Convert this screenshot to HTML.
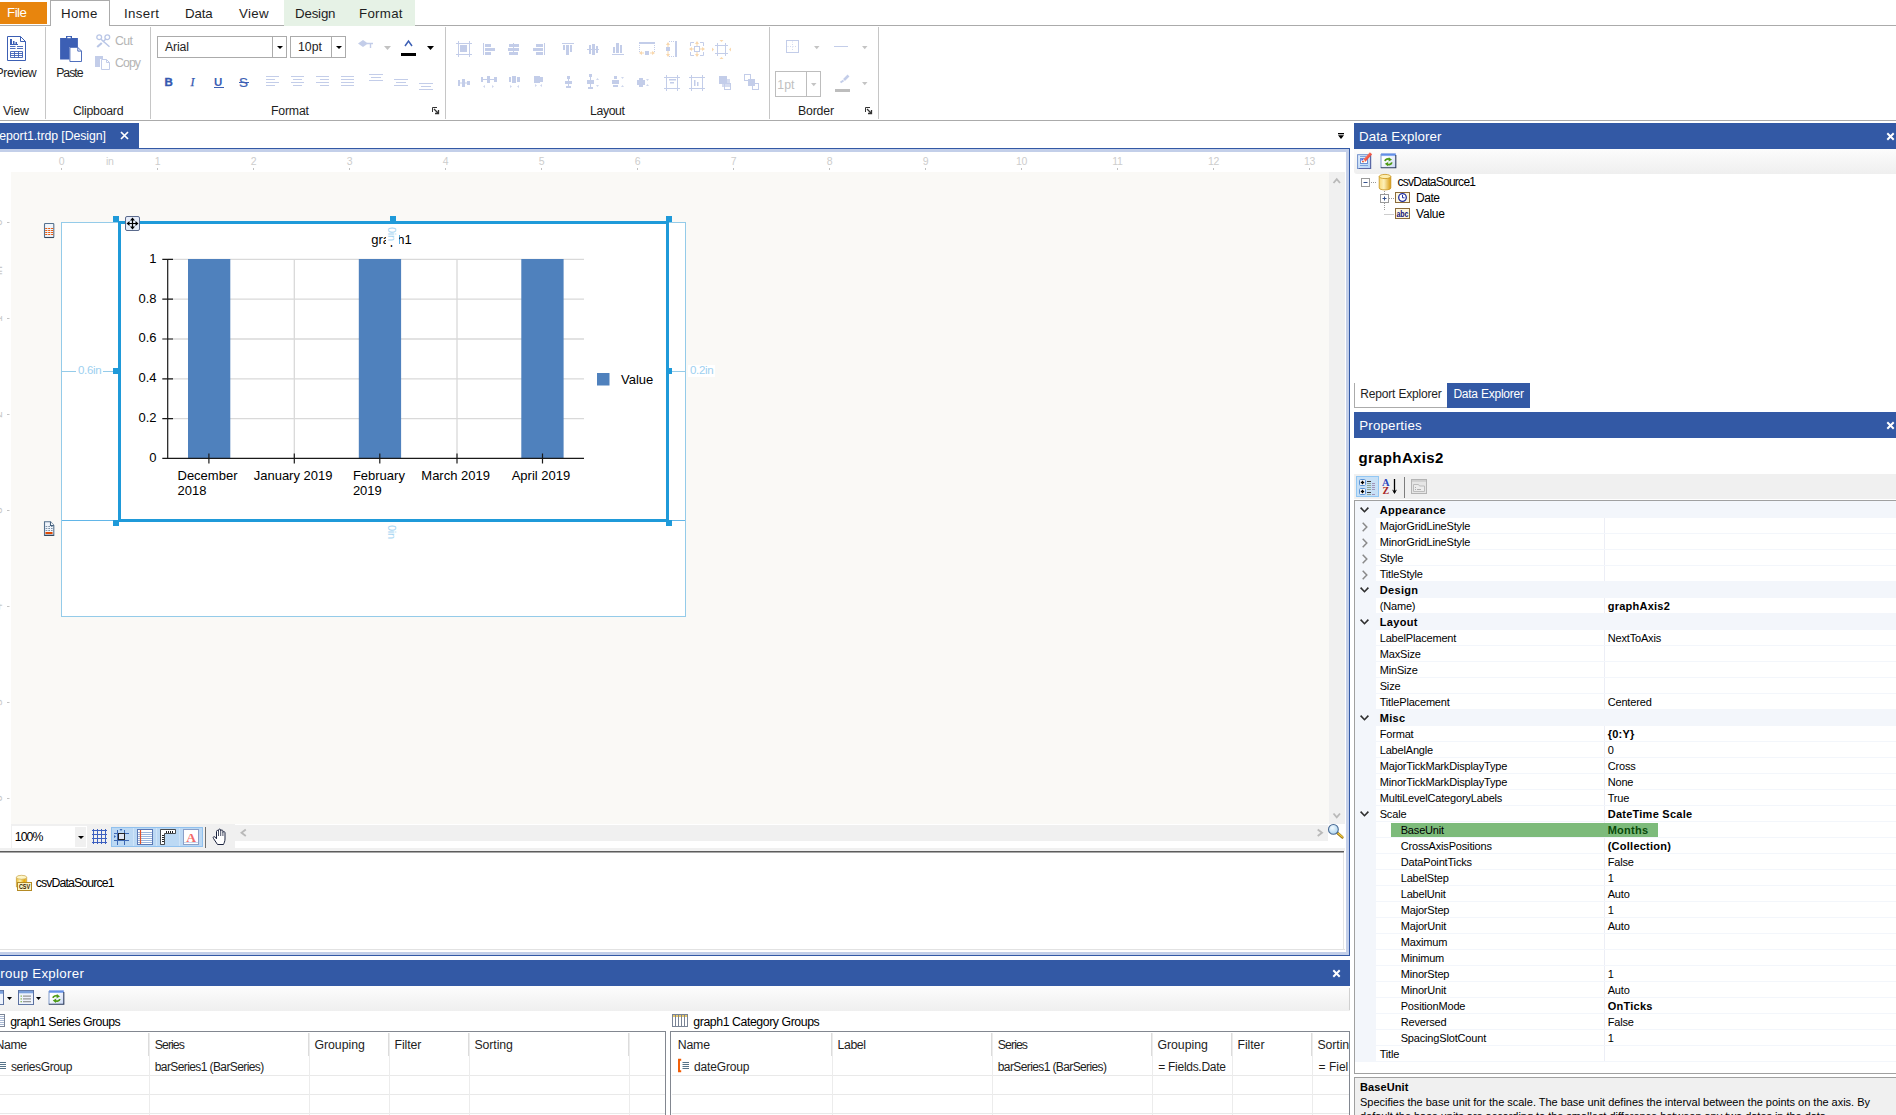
<!DOCTYPE html>
<html><head><meta charset="utf-8"><title>Report Designer</title>
<style>
*{box-sizing:border-box;margin:0;padding:0}
html,body{width:1896px;height:1115px;overflow:hidden;background:#fff}
body{position:relative;font-family:"Liberation Sans",sans-serif;font-size:12px;color:#1e1e1e}
.a{position:absolute}
.t{position:absolute;white-space:nowrap;line-height:1}
svg{position:absolute;overflow:visible}
.hdr{position:absolute;background:#3359a5;color:#fff;font-size:14px}
.hdr .t{top:5px}
.sep{position:absolute;width:1px;background:#c6c6c6;top:27px;height:92px}
.gl{position:absolute;top:105px;font-size:12.5px;white-space:nowrap;line-height:1;color:#1e1e1e}
.dis{color:#b4b4b4}
.pg{position:absolute;left:1357px;width:539px;height:16px;font-size:11px;line-height:16px;white-space:nowrap}
.pg .n{position:absolute;left:23px;top:0}
.pg .n2{position:absolute;left:44px;top:0}
.pg .v{position:absolute;left:251px;top:0}
.pg.cat{background:#f2f3f8;font-weight:bold;font-size:11.5px}
.b{font-weight:bold}
.th{position:absolute;top:1038px;font-size:12.5px;white-space:nowrap;line-height:1}
.td{position:absolute;top:1061px;font-size:11.5px;white-space:nowrap;line-height:1}
</style></head><body>
<!-- ===== Ribbon tab strip ===== -->
<div class="a" style="left:0;top:25px;width:1896px;height:1px;background:#ababab"></div>
<div class="a" style="left:284px;top:0;width:131px;height:26px;background:#e6f2e6"></div>
<div class="a" style="left:0;top:2px;width:47px;height:22px;background:#e8850d"></div>
<div class="t" style="left:7.0px;top:6px;font-size:13.3px;letter-spacing:-0.477px;color:#fff;">File</div>
<div class="a" style="left:50px;top:0;width:60px;height:26px;background:#fff;border:1px solid #ababab;border-bottom:none"></div>
<div class="t" style="left:61.0px;top:7px;font-size:13.3px;letter-spacing:0.274px;">Home</div>
<div class="t" style="left:124.0px;top:7px;font-size:13.3px;letter-spacing:0.347px;">Insert</div>
<div class="t" style="left:185.0px;top:7px;font-size:13.3px;letter-spacing:-0.131px;">Data</div>
<div class="t" style="left:239.0px;top:7px;font-size:13.3px;letter-spacing:0.305px;">View</div>
<div class="t" style="left:295.0px;top:7px;font-size:13.3px;letter-spacing:-0.180px;">Design</div>
<div class="t" style="left:359.0px;top:7px;font-size:13.3px;letter-spacing:0.276px;">Format</div>

<!-- ===== Ribbon body ===== -->
<div class="a" style="left:0;top:120px;width:1896px;height:1px;background:#ababab"></div>
<div class="sep" style="left:45px"></div>
<div class="sep" style="left:150px"></div>
<div class="sep" style="left:445px"></div>
<div class="sep" style="left:769px"></div>
<div class="sep" style="left:878px"></div>
<div class="t" style="left:3.0px;top:105px;font-size:12.3px;letter-spacing:-0.146px;">View</div>
<div class="t" style="left:73.0px;top:105px;font-size:12.3px;letter-spacing:-0.268px;">Clipboard</div>
<div class="t" style="left:271.0px;top:105px;font-size:12.3px;letter-spacing:-0.191px;">Format</div>
<div class="t" style="left:590.0px;top:105px;font-size:12.3px;letter-spacing:-0.386px;">Layout</div>
<div class="t" style="left:798.0px;top:105px;font-size:12.3px;letter-spacing:-0.183px;">Border</div>

<!-- Preview -->
<svg style="left:6px;top:35px" width="22" height="27" viewBox="6 35 22 27" fill="none" stroke="#3c5fb4">
<path d="M7.500 36.500H20.500L25.500 41.500V60.500H7.500Z" fill="#fff"/>
<path d="M20.500 36.500V41.500H25.500"/>
<path d="M10 44.500H18" />
<rect x="10" y="39" width="2" height="5" fill="#3c5fb4" stroke="none"/><rect x="13" y="41" width="1.500" height="3" fill="#3c5fb4" stroke="none"/><rect x="15.500" y="42" width="1.500" height="2" fill="#3c5fb4" stroke="none"/>
<path d="M10 46.500H15.500M17 46.500H23M10 48.500H15.500M17 48.500H23" stroke-width="0.900"/>
<path d="M10.500 51.500H22.500V57.500H10.500ZM10.500 53.500H22.500M10.500 55.500H22.500M14.500 51.500V57.500M18.500 51.500V57.500" stroke-width="0.900"/>
</svg>
<div class="t" style="left:-4.5px;top:67px;font-size:12.3px;letter-spacing:-0.424px;">Preview</div>
<!-- Paste -->
<svg style="left:59px;top:35px" width="24" height="28" viewBox="59 35 24 28">
<path d="M60.100 37.900H66V36H72V37.900H77.900V47H69.500V59.600H60.100Z" fill="#3c5fb4"/>
<rect x="67.300" y="36.900" width="3.400" height="1.300" fill="#fff"/>
<path d="M69.900 47.400H77.800L81.500 51.100V61.500H69.900Z" fill="#fff" stroke="#3c5fb4" stroke-width="0.900"/>
<path d="M77.800 47.400V51.100H81.500" fill="none" stroke="#3c5fb4" stroke-width="0.900"/>
</svg>
<div class="t" style="left:56.2px;top:67px;font-size:12.3px;letter-spacing:-1.038px;">Paste</div>
<!-- Cut / Copy -->
<svg style="left:96px;top:34px" width="15" height="15" viewBox="0 0 15 15">
<circle cx="3.200" cy="3.200" r="2.400" fill="none" stroke="#b9c6e6" stroke-width="1.300"/>
<circle cx="11.300" cy="3.200" r="2.400" fill="none" stroke="#b9c6e6" stroke-width="1.300"/>
<path d="M5 5.200L13.500 12.800M9.600 5.200L6.800 8" stroke="#b9c6e6" stroke-width="1.500" fill="none"/><path d="M5.800 9L1.200 13" stroke="#b9c6e6" stroke-width="2.200" fill="none"/>
</svg>
<div class="t" style="left:115.0px;top:35px;font-size:12.3px;letter-spacing:-0.570px;color:#b4b4b4;">Cut</div>
<svg style="left:95px;top:56px" width="16" height="15" viewBox="0 0 16 15">
<path d="M0 0H8V3H5V11H0Z" fill="#c3cde9"/>
<path d="M6.5 3.5H11.5L14.5 6.5V13.5H6.5Z" fill="#fff" stroke="#c3cde9"/>
<path d="M11.5 3.5V6.5H14.5" fill="none" stroke="#c3cde9"/>
</svg>
<div class="t" style="left:115.0px;top:57px;font-size:12.3px;letter-spacing:-0.905px;color:#b4b4b4;">Copy</div>

<!-- Font combos -->
<div class="a" style="left:157px;top:36px;width:130px;height:22px;border:1px solid #ababab;background:#fff"></div>
<div class="a" style="left:272px;top:37px;width:1px;height:20px;background:#ababab"></div>
<div class="t" style="left:165.0px;top:41px;font-size:12.3px;letter-spacing:-0.152px;">Arial</div>
<svg style="left:277px;top:46px" width="6" height="3.500"><path d="M0 0H6L3 3Z" fill="#000"/></svg>
<div class="a" style="left:290px;top:36px;width:56px;height:22px;border:1px solid #ababab;background:#fff"></div>
<div class="a" style="left:331px;top:37px;width:1px;height:20px;background:#ababab"></div>
<div class="t" style="left:298.0px;top:41px;font-size:12.3px;letter-spacing:0.020px;">10pt</div>
<svg style="left:336px;top:46px" width="6" height="3"><path d="M0 0H6L3 3Z" fill="#000"/></svg>
<!-- fill / font colour -->
<svg style="left:358px;top:40px" width="16" height="12" viewBox="0 0 16 12"><path d="M5 0L10 3.5L5 7L0 3.5Z" fill="#c3cde9"/><path d="M9 3.5H15M12.5 3.5V8" stroke="#c3cde9" stroke-width="1.4" fill="none"/></svg>
<svg style="left:384px;top:46px" width="7" height="4"><path d="M0 0H7L3.5 4Z" fill="#c2c2c2"/></svg>
<svg style="left:404px;top:40px" width="9" height="7" viewBox="0 0 9 7"><path d="M1 6L4.5 1L8 6" stroke="#3c5fb4" stroke-width="1.5" fill="none"/></svg>
<div class="a" style="left:401px;top:53px;width:15px;height:3px;background:#000"></div>
<svg style="left:427px;top:46px" width="7" height="4"><path d="M0 0H7L3.5 4Z" fill="#000"/></svg>

<!-- B I U S -->
<div class="t" style="left:164.500px;top:77px;font-size:11.500px;font-weight:bold;color:#3458b0;-webkit-text-stroke:0.350px #3458b0">B</div>
<div class="t" style="left:190.500px;top:76px;font-size:12px;font-style:italic;font-family:'Liberation Serif',serif;color:#3458b0;-webkit-text-stroke:0.250px #3458b0">I</div>
<div class="t" style="left:214px;top:77px;font-size:11.500px;font-weight:bold;color:#3c5fb4">U</div>
<div class="a" style="left:214px;top:87px;width:10px;height:1.200px;background:#3c5fb4"></div>
<div class="t" style="left:239px;top:75.500px;font-size:13.500px;color:#3c5fb4;-webkit-text-stroke:0.200px #3c5fb4">S</div>
<div class="a" style="left:239px;top:81.800px;width:9.500px;height:1.300px;background:#3c5fb4"></div>
<!-- align icons -->
<svg style="left:266px;top:75px" width="170" height="20" viewBox="0 0 170 20" stroke="#c3cde9" stroke-width="1" fill="none">
<path d="M0 1.5h13M0 4.5h9M0 7.5h13M0 10.5h9"/>
<path d="M25 1.5h13M27 4.5h9M25 7.5h13M27 10.5h9"/>
<path d="M50 1.5h13M54 4.5h9M50 7.5h13M54 10.5h9"/>
<path d="M75 1.5h13M75 4.5h13M75 7.5h13M75 10.5h13"/>
<path d="M103 -0.5h14M105 2.5h10M103 5.5h14"/>
<path d="M128 4.5h14M130 7.5h10M128 10.5h14"/>
<path d="M153 8.5h14M155 11.5h10M153 14.5h14"/>
</svg>
<!-- dialog launchers -->
<svg style="left:432px;top:107px" width="7" height="7" viewBox="0 0 7 7"><path d="M0.5 5V0.5H5" fill="none" stroke="#333"/><path d="M2 2L6.5 6.5M6.5 3v3.5H3" stroke="#333" fill="none" stroke-width="1.3"/></svg>
<svg style="left:865px;top:107px" width="7" height="7" viewBox="0 0 7 7"><path d="M0.5 5V0.5H5" fill="none" stroke="#333"/><path d="M2 2L6.5 6.5M6.5 3v3.5H3" stroke="#333" fill="none" stroke-width="1.3"/></svg>
<!-- ===== Layout group icons ===== -->
<svg style="left:448px;top:30px" width="320" height="70" viewBox="448 30 320 70" fill="#c3cde9" stroke="none">
<g stroke="#c3cde9" stroke-width="1" fill="none">
<!-- r1 i1 frame -->
<path d="M456 43.5h16M456 54.5h16M458.5 41v16M469.5 41v16"/>
<!-- align left -->
<path d="M483.5 43v12"/>
<!-- align center -->
<path d="M513.5 43v12"/>
<!-- align right -->
<path d="M544.5 43v12"/>
<!-- top -->
<path d="M562 43.5h12"/>
<!-- middle -->
<path d="M587 49.5h12"/>
<!-- bottom -->
<path d="M612 54.5h12"/>
<!-- same width -->
<path d="M639 43h16" stroke-width="2"/>
<path d="M639.5 45v7M654.5 45v7" stroke-dasharray="1 1"/>
<!-- same height -->
<path d="M676 41v16" stroke-width="2"/>
<path d="M669 41.5h6M669 56.5h6" stroke-dasharray="1 1"/>
<!-- same size -->
<path d="M690.5 46v-3.500h3.500M700 42.500h3.500v3.500M703.500 52v3.500h-3.500M694 55.500h-3.500v-3.500"/>
<rect x="694.5" y="46.500" width="5" height="5"/>
<!-- size to grid -->
<rect x="717.5" y="45.500" width="8" height="8"/>
<path d="M715 45.500h13M715 53.500h13M717.500 43v13M725.500 43v13" />
<!-- r2: frames -->
<path d="M664 77.500h16M664 88.500h16M666.500 75v16M677.500 75v16"/>
<path d="M689 77.500h16M689 88.500h16M691.500 75v16M702.500 75v16"/>
<!-- bring/send -->
<rect x="724.5" y="83.500" width="6" height="6" fill="#fff"/>
<rect x="744.500" y="74.500" width="6" height="6" fill="#fff"/>
<rect x="752.500" y="83.500" width="6" height="6" fill="#fff"/>
</g>
<!-- filled parts -->
<rect x="460" y="45" width="7" height="7"/>
<rect x="485" y="44" width="6" height="3"/><rect x="485" y="48" width="10" height="3"/><rect x="485" y="52" width="6" height="3"/>
<rect x="509" y="44" width="10" height="3"/><rect x="508" y="48" width="11" height="3"/><rect x="509" y="52" width="9" height="3"/>
<rect x="536" y="44" width="7" height="3"/><rect x="533" y="48" width="10" height="3"/><rect x="536" y="52" width="7" height="3"/>
<rect x="563" y="45" width="2" height="5"/><rect x="566" y="45" width="3" height="10"/><rect x="570" y="45" width="2" height="7"/>
<rect x="589" y="45" width="2" height="9"/><rect x="592" y="44" width="3" height="11"/><rect x="596" y="46" width="2" height="7"/>
<rect x="613" y="47" width="2" height="6"/><rect x="616" y="43" width="3" height="10"/><rect x="620" y="45" width="2" height="8"/>
<rect x="645" y="51" width="4" height="4"/>
<rect x="666" y="47" width="4" height="4"/>
<g fill="#f8d7ad">
<path d="M639 53l3-2v4zM655 53l-3-2v4z"/><rect x="641" y="52.5" width="3" height="1"/><rect x="650" y="52.500" width="3" height="1"/>
<path d="M668 42l-2 3h4zM668 57l-2-3h4z"/><rect x="667.500" y="44" width="1" height="3"/><rect x="667.500" y="51" width="1" height="3"/>
<path d="M697 41l-2 3h4zM697 57l-2-3h4zM689 49l3-2v4zM705 49l-3-2v4z"/>
<rect x="696.5" y="43" width="1" height="3"/><rect x="696.500" y="52" width="1" height="3"/><rect x="691" y="48.500" width="3" height="1"/><rect x="700" y="48.500" width="3" height="1"/>
<path d="M721.500 42l-2-2h4zM721.500 57l-2 2h4zM714 49.500l-2-2v4zM729 49.500l2-2v4z"/>
</g>
<!-- row 2 filled -->
<rect x="458" y="80" width="2" height="6"/><rect x="462" y="79" width="3" height="8"/><rect x="467" y="81" width="3" height="4"/><rect x="458" y="82.500" width="12" height="1"/>
<rect x="481" y="77" width="2" height="5"/><rect x="487" y="76" width="3" height="7"/><rect x="494" y="77" width="3" height="5"/><rect x="481" y="79" width="16" height="1"/>
<path d="M485 85l-2 1.500l2 1.500zM492 85l2 1.500l-2 1.500z" opacity=".8"/>
<rect x="509" y="77" width="2" height="5"/><rect x="512" y="76" width="4" height="7"/><rect x="517" y="77" width="3" height="5"/>
<path d="M510 85l2 1.500l-2 1.500zM519 85l-2 1.500l2 1.500z" opacity=".8"/>
<rect x="534" y="76" width="6" height="7"/><rect x="538" y="77" width="5" height="5"/>
<path d="M535 84l2 1.500l-2 1.500zM542 84l-2 1.500l2 1.500z" opacity=".8"/>
<rect x="567" y="76" width="3" height="3"/><rect x="565" y="81" width="7" height="3"/><rect x="566" y="86" width="5" height="2"/><rect x="568" y="76" width="1" height="12"/>
<rect x="589" y="74" width="3" height="3"/><rect x="587" y="80" width="7" height="4"/><rect x="588" y="87" width="5" height="2"/><rect x="590" y="74" width="1" height="15"/>
<path d="M596 80l1.500-2l1.500 2zM596 85l1.500 2l1.500-2z" opacity=".8"/>
<rect x="614" y="76" width="3" height="3"/><rect x="612" y="80" width="7" height="4"/><rect x="613" y="85" width="5" height="2"/>
<path d="M621 77l1.500 2l1.500-2zM621 87l1.500-2l1.500 2z" opacity=".8"/>
<rect x="639" y="78" width="4" height="9"/><rect x="637" y="80" width="8" height="5"/>
<path d="M646 79l1.500 2l1.500-2zM646 86l1.500-2l1.500 2z" opacity=".8"/>
<rect x="669" y="79" width="7" height="1.500"/><rect x="670" y="82" width="4" height="1.500"/>
<rect x="694" y="80" width="1.500" height="6"/><rect x="697" y="82" width="1.500" height="4"/>
<rect x="719" y="76" width="8" height="8"/><rect x="722" y="79" width="8" height="8" opacity=".7"/>
<rect x="748" y="79" width="7" height="7"/>
</svg>

<!-- ===== Border group ===== -->
<svg style="left:786px;top:40px" width="13" height="13" viewBox="0 0 13 13"><rect x="0.500" y="0.500" width="12" height="12" fill="none" stroke="#c3cde9"/><path d="M6.500 1.500v10M1.500 6.500h10" stroke="#d3dbf0" stroke-dasharray="1 1.500"/></svg>
<svg style="left:814px;top:46px" width="5.500" height="3.300" viewBox="0 0 5.500 3.300"><path d="M0 0H5.500L2.750 3.300Z" fill="#c4c4c4"/></svg>
<div class="a" style="left:834px;top:46px;width:14px;height:1px;background:#c3cde9"></div>
<svg style="left:862px;top:46px" width="5.500" height="3.300" viewBox="0 0 5.500 3.300"><path d="M0 0H5.500L2.750 3.300Z" fill="#c4c4c4"/></svg>
<div class="a" style="left:775px;top:71px;width:46px;height:26px;border:1px solid #bdbdbd;background:#fff"></div>
<div class="a" style="left:806px;top:72px;width:1px;height:24px;background:#bdbdbd"></div>
<div class="t" style="left:777.3px;top:79px;font-size:12.3px;letter-spacing:0.051px;color:#c0c0c0;">1pt</div>
<svg style="left:811px;top:83px" width="5.500" height="3.300" viewBox="0 0 5.500 3.300"><path d="M0 0H5.500L2.750 3.300Z" fill="#c4c4c4"/></svg>
<svg style="left:835px;top:74px" width="16" height="18" viewBox="0 0 16 18"><path d="M9 6L13.500 1.500" stroke="#c3cde9" stroke-width="2.600"/><path d="M5.500 8.500l3-2" stroke="#c3cde9" stroke-width="2"/><rect x="0" y="15" width="15" height="3" fill="#bdbdbd"/></svg>
<svg style="left:862px;top:82px" width="5.500" height="3.300" viewBox="0 0 5.500 3.300"><path d="M0 0H5.500L2.750 3.300Z" fill="#c4c4c4"/></svg>
<!-- ===== Document tab strip ===== -->
<div class="a" style="left:0;top:123px;width:139px;height:26px;background:#3359a5"></div>
<div class="t" style="left:-9.5px;top:130px;font-size:12.3px;letter-spacing:-0.070px;color:#fff;">Report1.trdp [Design]</div>
<svg style="left:120px;top:131px" width="9" height="9" viewBox="0 0 9 9"><path d="M1 1L8 8M8 1L1 8" stroke="#fff" stroke-width="1.700"/></svg>
<svg style="left:1338px;top:133px" width="6" height="6" viewBox="0 0 6 6"><rect x="0" y="0" width="6" height="1.300" fill="#000"/><path d="M0 2.300H6L3 6Z" fill="#000"/></svg>
<div class="a" style="left:0;top:148px;width:1350px;height:1px;background:#3359a5"></div>
<div class="a" style="left:0;top:149px;width:1349px;height:3px;background:#c3cfe9"></div>
<div class="a" style="left:1346px;top:150px;width:3px;height:806px;background:#c3cfe9"></div>

<!-- ===== Rulers ===== -->
<div class="a" id="hruler" style="left:0;top:152px;width:1346px;height:20px;background:#fff;color:#cdcdcd;font-size:10.500px">
<span class="t" style="left:46.5px;top:4px;width:30px;text-align:center;letter-spacing:-0.300px">0</span><span class="t" style="left:142.5px;top:4px;width:30px;text-align:center;letter-spacing:-0.300px">1</span><span class="t" style="left:238.5px;top:4px;width:30px;text-align:center;letter-spacing:-0.300px">2</span><span class="t" style="left:334.5px;top:4px;width:30px;text-align:center;letter-spacing:-0.300px">3</span><span class="t" style="left:430.5px;top:4px;width:30px;text-align:center;letter-spacing:-0.300px">4</span><span class="t" style="left:526.5px;top:4px;width:30px;text-align:center;letter-spacing:-0.300px">5</span><span class="t" style="left:622.5px;top:4px;width:30px;text-align:center;letter-spacing:-0.300px">6</span><span class="t" style="left:718.5px;top:4px;width:30px;text-align:center;letter-spacing:-0.300px">7</span><span class="t" style="left:814.5px;top:4px;width:30px;text-align:center;letter-spacing:-0.300px">8</span><span class="t" style="left:910.5px;top:4px;width:30px;text-align:center;letter-spacing:-0.300px">9</span><span class="t" style="left:1006.5px;top:4px;width:30px;text-align:center;letter-spacing:-0.300px">10</span><span class="t" style="left:1102.5px;top:4px;width:30px;text-align:center;letter-spacing:-0.300px">11</span><span class="t" style="left:1198.5px;top:4px;width:30px;text-align:center;letter-spacing:-0.300px">12</span><span class="t" style="left:1294.5px;top:4px;width:30px;text-align:center;letter-spacing:-0.300px">13</span><span class="t" style="left:94.8px;top:4px;width:30px;text-align:center;letter-spacing:-0.300px">in</span>
</div>
<svg style="left:0;top:168px" width="1347" height="3"><path d="M61.500 0v2M157.500 0v2M253.500 0v2M349.500 0v2M445.500 0v2M541.500 0v2M637.500 0v2M733.500 0v2M829.500 0v2M925.500 0v2M1021.500 0v2M1117.500 0v2M1213.500 0v2M1309.500 0v2" stroke="#c0c0c0"/></svg>
<!-- left ruler -->
<div class="a" style="left:0;top:172px;width:11px;height:652px;background:#fff;overflow:hidden;color:#c9c9c9;font-size:11.500px">
<span class="t" style="left:0;top:0;transform-origin:0 0;transform:translate(-6.800px,53.7px) rotate(-90deg)">0</span>
<span class="t" style="left:0;top:0;transform-origin:0 0;transform:translate(-6.800px,103.0px) rotate(-90deg)">in</span>
<span class="t" style="left:0;top:0;transform-origin:0 0;transform:translate(-6.800px,149.7px) rotate(-90deg)">1</span>
<span class="t" style="left:0;top:0;transform-origin:0 0;transform:translate(-6.800px,245.7px) rotate(-90deg)">2</span>
<span class="t" style="left:0;top:0;transform-origin:0 0;transform:translate(-6.800px,341.7px) rotate(-90deg)">3</span>
<span class="t" style="left:0;top:0;transform-origin:0 0;transform:translate(-6.800px,437.7px) rotate(-90deg)">4</span>
<span class="t" style="left:0;top:0;transform-origin:0 0;transform:translate(-6.800px,533.7px) rotate(-90deg)">5</span>
<span class="t" style="left:0;top:0;transform-origin:0 0;transform:translate(-6.800px,629.7px) rotate(-90deg)">6</span>
</div>
<svg style="left:7px;top:172px" width="3" height="652"><path d="M0 50.500h2.500M0 146.500h2.500M0 242.500h2.500M0 338.500h2.500M0 434.500h2.500M0 530.500h2.500M0 626.500h2.500" stroke="#c4c4c4"/></svg>

<!-- ===== Design surface ===== -->
<div class="a" style="left:11px;top:172px;width:1318px;height:652px;background:#faf9f6"></div>
<div class="a" style="left:1329px;top:172px;width:16px;height:652px;background:#f0f0f0"></div>
<svg style="left:1333px;top:178px" width="8" height="6" viewBox="0 0 8 6"><path d="M0.500 5L3.750 1.200L7 5" fill="none" stroke="#b9b9b9" stroke-width="1.800"/></svg>
<svg style="left:1333px;top:813px" width="8" height="6" viewBox="0 0 8 6"><path d="M0.500 0.500L3.750 4.300L7 0.500" fill="none" stroke="#b9b9b9" stroke-width="1.800"/></svg>

<!-- report page -->
<div class="a" style="left:61px;top:222px;width:625px;height:395px;background:#fff;border:1px solid #94cbe9"></div>
<div class="a" style="left:62px;top:520px;width:623px;height:1px;background:#62b6e8"></div>
<!-- section icons -->
<svg style="left:43px;top:222px" width="13" height="17" viewBox="43 222 13 17">
<rect x="44.500" y="223.500" width="9.300" height="14" rx="0.800" fill="#f0f5fb" stroke="#56728e" stroke-width="1.100"/>
<path d="M44.500 237.500h9.300" stroke="#36475a" stroke-width="1.100"/>
<path d="M45.200 228.500h8M45.200 230.500h8M45.200 232.500h8M45.200 234.500h8" stroke="#e85a0a" stroke-width="1.150" stroke-dasharray="2.100 0.850"/>
</svg>
<svg style="left:43px;top:520px" width="13" height="17" viewBox="43 520 13 17">
<path d="M44.500 521.700H50.500L53.800 525.500V535.400H44.500Z" fill="#f0f5fb" stroke="#56728e" stroke-width="1.100"/>
<path d="M50.500 521.700V525.500H53.800" fill="#fff" stroke="#46627e" stroke-width="1.100"/>
<path d="M44.500 535.400h9.300" stroke="#36475a" stroke-width="1.100"/>
<path d="M45.600 526.500h7M45.600 528.500h7M45.600 530.500h7" stroke="#7e93a8" stroke-width="1" stroke-dasharray="1.700 1"/>
<rect x="45.400" y="532" width="7.200" height="2.100" rx="0.600" fill="#dd4a04"/>
</svg>

<!-- dimension guides -->
<div class="a" style="left:62px;top:371px;width:56px;height:1px;background:#94cbe9"></div>
<div class="t" style="left:76px;top:365px;font-size:11.500px;color:#9dd0f0;background:#fff;padding:0 2px;letter-spacing:-0.300px">0.6in</div>
<div class="a" style="left:669px;top:371px;width:17px;height:1px;background:#94cbe9"></div>
<div class="t" style="left:688px;top:365px;font-size:11.500px;color:#9dd0f0;background:#fff;padding:0 2px;letter-spacing:-0.300px">0.2in</div>
<!-- ===== Graph item ===== -->
<svg style="left:118px;top:221px" width="552" height="302" viewBox="118 221 552 302" font-family="Liberation Sans, sans-serif" font-size="13px" fill="#000">
<rect x="121" y="224" width="545" height="295" fill="#fff"/>
<g stroke="#d9d9d9" stroke-width="1.300">
<path d="M168 259.400H584M168 299.200H584M168 339H584M168 378.800H584M168 418.600H584"/>
<path d="M208.900 259V458M294.300 259V458M379.800 259V458M457 259V458M542.500 259V458"/>
</g>
<rect x="188" y="259" width="42.300" height="199.300" fill="#4f81bd"/>
<rect x="358.800" y="259" width="42.300" height="199.300" fill="#4f81bd"/>
<rect x="521.300" y="259" width="42.300" height="199.300" fill="#4f81bd"/>
<g stroke="#1a1a1a" stroke-width="1.200">
<path d="M167.700 259V458.900"/>
<path d="M162.300 458.300H584"/>
<path d="M162.300 259.400H173M162.300 299.200H173M162.300 339H173M162.300 378.800H173M162.300 418.600H173"/>
<path d="M208.900 453.500V463.500M294.300 453.500V463.500M379.800 453.500V463.500M457 453.500V463.500M542.500 453.500V463.500"/>
</g>
<g text-anchor="end">
<text x="156.500" y="262.800">1</text><text x="156.500" y="302.600">0.8</text><text x="156.500" y="342.400">0.6</text>
<text x="156.500" y="382.200">0.4</text><text x="156.500" y="422">0.2</text><text x="156.500" y="461.800">0</text>
</g>
<text x="177.500" y="479.700">December</text><text x="177.500" y="494.700">2018</text>
<text x="253.700" y="479.700">January 2019</text>
<text x="352.900" y="479.700">February</text><text x="352.900" y="494.700">2019</text>
<text x="421.300" y="479.700">March 2019</text>
<text x="511.700" y="479.700">April 2019</text>
<text x="391.500" y="244" text-anchor="middle">graph1</text>
<rect x="597" y="373" width="12.500" height="12.500" fill="#4f81bd"/>
<text x="621" y="384">Value</text>
<rect x="119.500" y="222.500" width="548" height="298" fill="none" stroke="#1f9ad9" stroke-width="3"/>
</svg>
<!-- 0in labels -->
<div class="a" style="left:386px;top:225px;width:13px;height:20px;background:#fff"></div>
<div class="t" style="left:386px;top:227px;font-size:11px;color:#a8d6f2;transform-origin:0 0;transform:translate(11px,0) rotate(90deg);letter-spacing:-0.300px">0in</div>
<div class="a" style="left:386px;top:523px;width:13px;height:18px;background:#fff"></div>
<div class="t" style="left:386px;top:525px;font-size:11px;color:#a8d6f2;transform-origin:0 0;transform:translate(11px,0) rotate(90deg);letter-spacing:-0.300px">0in</div>
<!-- handles -->
<svg style="left:113px;top:216px" width="562" height="312" viewBox="113 216 562 312" fill="#1f9ad9">
<rect x="113" y="216" width="6" height="6"/><rect x="390" y="216" width="6" height="6"/><rect x="666" y="216" width="6" height="6"/>
<rect x="113" y="368" width="6" height="6"/><rect x="666" y="368" width="6" height="6"/>
<rect x="113" y="520" width="6" height="6"/><rect x="390" y="520" width="6" height="2"/><rect x="666" y="520" width="6" height="6"/>
</svg>
<!-- move glyph -->
<svg style="left:125px;top:216px" width="15" height="15" viewBox="0 0 15 15">
<rect x="0.500" y="0.500" width="14" height="14" rx="1.500" fill="#e6ecf8" stroke="#5a6a8c"/>
<path d="M7.500 1.500L5 4.500H10ZM7.500 13.500L5 10.500H10ZM1.500 7.500L4.500 5V10ZM13.500 7.500L10.500 5V10Z" fill="#000"/>
<path d="M7.500 3V12M3 7.500H12" stroke="#000" stroke-width="1.200"/>
</svg>
<!-- ===== Designer status bar ===== -->
<div class="a" style="left:11px;top:824px;width:224px;height:27px;background:#f0f0f0"></div>
<div class="a" style="left:235px;top:824px;width:1111px;height:27px;background:#fff"></div>
<div class="a" style="left:235px;top:825px;width:1093px;height:16px;background:#f0f0f0"></div>
<div class="a" style="left:0;top:848px;width:1345px;height:3px;background:#f0f0f0"></div>
<div class="a" style="left:12px;top:826px;width:63px;height:22px;background:#fff"></div>
<div class="a" style="left:75px;top:826px;width:12px;height:22px;background:#f0f0f0;border:1px solid #fff;border-left:none"></div>
<div class="t" style="left:14.8px;top:831px;font-size:12.3px;letter-spacing:-0.953px;color:#000;">100%</div>
<svg style="left:78px;top:836px" width="6" height="3"><path d="M0 0H6L3 3Z" fill="#000"/></svg>
<svg style="left:92px;top:829px" width="15" height="15" viewBox="0 0 15 15"><path d="M1.500 0v15M5.500 0v15M9.500 0v15M13.500 0v15M0 1.500h15M0 5.500h15M0 9.500h15M0 13.500h15" stroke="#3c5fc0" stroke-width="1"/></svg>
<div class="a" style="left:111px;top:827px;width:92px;height:20px;background:#bcd9f4;border:1px solid #91c1ee"></div>
<div class="a" style="left:133px;top:828px;width:1px;height:18px;background:#cfe4f8"></div>
<div class="a" style="left:156px;top:828px;width:1px;height:18px;background:#cfe4f8"></div>
<div class="a" style="left:179px;top:828px;width:1px;height:18px;background:#cfe4f8"></div>
<!-- snap icon -->
<svg style="left:114px;top:829px" width="16" height="16" viewBox="0 0 16 16"><path d="M0 4.500h15M0 11.500h15M3.500 1v15M10.500 1v15" stroke="#3c68b4" stroke-width="1"/><rect x="4.500" y="4.500" width="6" height="6" fill="#dfe6f2" stroke="#222"/><path d="M5.500 0h3l-1.500 2zM0 6v3l2-1.500z" fill="#3c68b4"/></svg>
<!-- lined page -->
<svg style="left:137px;top:829px" width="16" height="16" viewBox="0 0 16 16"><rect x="0.500" y="0.500" width="15" height="15" fill="#fff" stroke="#5a78b4"/><path d="M1 3.500h14M1 5.500h14M1 7.500h14M1 9.500h14M1 11.500h14M1 13.500h14" stroke="#9ab4dc"/><path d="M3.500 1v14" stroke="#e0502a" stroke-width="1.200"/></svg>
<!-- ruler icon -->
<svg style="left:160px;top:829px" width="16" height="16" viewBox="0 0 16 16"><path d="M0.500 0.500H15.500V4.500H4.500V15.500H0.500Z" fill="#fff" stroke="#222" stroke-width="0.800"/><path d="M6.500 2v2M8.500 2v2M10.500 2v2M12.500 2v2M2 6.500h2M2 8.500h2M2 10.500h2M2 12.500h2" stroke="#222"/></svg>
<!-- A page -->
<svg style="left:183px;top:829px" width="16" height="16" viewBox="0 0 16 16"><rect x="0.500" y="0.500" width="15" height="15" fill="#fff" stroke="#8aa0c8"/><path d="M1 13.500h14" stroke="#c8d4ea"/><text x="8" y="13" font-family="Liberation Serif, serif" font-weight="bold" font-size="13.500px" fill="#f26a6a" text-anchor="middle">A</text></svg>
<div class="a" style="left:205px;top:827px;width:1px;height:21px;background:#6e6e6e"></div>
<!-- hand -->
<svg style="left:212px;top:828px" width="17" height="18" viewBox="0 0 17 18"><path d="M5.500 16.500L1.500 10.500C0.500 9 2 8 3.200 9.200L4.500 10.800V3.500C4.500 2 6.500 2 6.500 3.500V2.200C6.500 0.700 8.700 0.700 8.700 2.200V3C8.700 1.600 10.900 1.600 10.900 3.200V4.500C10.900 3.200 13 3.200 13 4.800V11C13 13.500 12 15 11.500 16.500Z" fill="#fff" stroke="#1c2440" stroke-width="1"/><path d="M6.500 3.500V8M8.700 3V8M10.900 4.500V8" stroke="#1c2440" stroke-width="0.800"/></svg>
<svg style="left:240px;top:829px" width="7" height="8" viewBox="0 0 7 8"><path d="M5.800 0.500L1.500 3.750L5.800 7" fill="none" stroke="#b9b9b9" stroke-width="1.800"/></svg>
<svg style="left:1317px;top:829px" width="7" height="8" viewBox="0 0 7 8"><path d="M0.700 0.500L5 3.750L0.700 7" fill="none" stroke="#b9b9b9" stroke-width="1.800"/></svg>
<!-- magnifier -->
<svg style="left:1326px;top:822px" width="19" height="19" viewBox="1326 822 19 19"><defs><radialGradient id="mg" cx=".4" cy=".35" r=".7"><stop offset="0" stop-color="#f4fbff"/><stop offset="1" stop-color="#a9d2ee"/></radialGradient></defs><path d="M1337.500 833L1342.300 837.300" stroke="#8a6a10" stroke-width="2.600" stroke-linecap="round"/><path d="M1337.800 833L1342.300 837" stroke="#f2c83c" stroke-width="1.400" stroke-linecap="round"/><circle cx="1333.400" cy="829.400" r="4.900" fill="url(#mg)" stroke="#4a6a94" stroke-width="1.100"/></svg>
<div class="a" style="left:0;top:851px;width:1344px;height:1px;background:#5c5c5c"></div>
<div class="a" style="left:0;top:852px;width:1344px;height:1px;background:#a8a8a8"></div>

<!-- ===== Component tray ===== -->
<svg style="left:15px;top:874px" width="18" height="18" viewBox="15 874 18 18"><defs><linearGradient id="tc" x1="0" x2="1"><stop offset="0" stop-color="#f0c030"/><stop offset=".35" stop-color="#fdf3b0"/><stop offset=".75" stop-color="#e8a808"/><stop offset="1" stop-color="#f2c84a"/></linearGradient></defs><path d="M16.400 877.300V887h10.300V877.300Z" fill="url(#tc)" stroke="#c49a3a" stroke-width="0.700"/><ellipse cx="21.550" cy="877.300" rx="5.150" ry="2" fill="#fdf6c8" stroke="#c8a44a" stroke-width="0.700"/><rect x="17.500" y="882.500" width="14" height="8" fill="#fbf4c6" stroke="#b48a24"/><text x="24.500" y="889.300" font-family="Liberation Sans, sans-serif" font-weight="bold" font-size="6.800px" fill="#3a2400" text-anchor="middle" textLength="11.200" lengthAdjust="spacingAndGlyphs">CSV</text></svg>
<div class="t" style="left:35.7px;top:877px;font-size:12.3px;letter-spacing:-0.873px;color:#000;">csvDataSource1</div>
<div class="a" style="left:0;top:949px;width:1345px;height:1px;background:#e2e2e2"></div>
<div class="a" style="left:1343px;top:853px;width:1px;height:97px;background:#e4e4e4"></div>
<div class="a" style="left:0;top:952px;width:1350px;height:3px;background:#c3cfe9"></div>
<div class="a" style="left:0;top:955px;width:1350px;height:1px;background:#3359a5"></div>
<div class="a" style="left:1349px;top:148px;width:1px;height:808px;background:#3359a5"></div>
<!-- ===== Group Explorer ===== -->
<div class="hdr" style="left:0;top:960px;width:1350px;height:26px"></div>
<div class="t" style="left:-10.3px;top:967px;font-size:13.3px;letter-spacing:0.309px;color:#fff;">Group Explorer</div>
<svg style="left:1333px;top:970px" width="7" height="7" viewBox="0 0 7 7"><path d="M1 1L6 6M6 1L1 6" stroke="#fff" stroke-width="2" stroke-linecap="square"/></svg>
<div class="a" style="left:0;top:986px;width:1350px;height:25px;background:linear-gradient(#fdfdfd,#efefef)"></div>
<div class="a" style="left:1349px;top:988px;width:1px;height:22px;background:#d0d0d0"></div>
<svg style="left:-12px;top:990px" width="16" height="15" viewBox="0 0 16 16" preserveAspectRatio="none"><rect x="0.500" y="0.500" width="15" height="15" fill="#eef3fc" stroke="#5a70a0"/><rect x="1" y="1" width="14" height="3" fill="#7aa0dc"/></svg>
<svg style="left:7px;top:997px" width="5" height="3"><path d="M0 0H5L2.500 3Z" fill="#000"/></svg>
<svg style="left:18px;top:990px" width="16" height="15" viewBox="0 0 16 16" preserveAspectRatio="none"><rect x="0.500" y="0.500" width="15" height="15" fill="#eef3fc" stroke="#5a70a0"/><rect x="1" y="1" width="14" height="2.500" fill="#7aa0dc"/><path d="M5 6.500h8M5 9.500h8M5 12.500h8" stroke="#7a7a7a"/><path d="M2.500 6.500h1.500M2.500 9.500h1.500M2.500 12.500h1.500" stroke="#6ea82a"/></svg>
<svg style="left:36px;top:997px" width="5" height="3"><path d="M0 0H5L2.500 3Z" fill="#000"/></svg>
<svg style="left:48px;top:990px" width="17" height="15.500" viewBox="0 0 17 16" preserveAspectRatio="none"><defs><linearGradient id="rf2" x1="0" y1="0" x2="1" y2="1"><stop offset="0.3" stop-color="#fff"/><stop offset="1" stop-color="#c8d6f4"/></linearGradient><linearGradient id="rt2" x1="0" y1="0" x2="0" y2="1"><stop offset="0" stop-color="#3f72dc"/><stop offset="1" stop-color="#9dbcf6"/></linearGradient></defs><rect x="1" y="0.800" width="14.800" height="14" fill="url(#rf2)"/><rect x="1" y="0.500" width="14.800" height="2.600" fill="url(#rt2)"/><path d="M1 1V14.800" stroke="#7f9acc" stroke-width="1"/><path d="M0.800 14.700H15.800V2" fill="none" stroke="#2c3c5c" stroke-width="1.100"/><path d="M5 8.200C5.300 6 8 5.600 9.600 6.300" fill="none" stroke="#4e9a14" stroke-width="1.700"/><path d="M8.800 4.200L12 6.700L8.600 8.600Z" fill="#4e9a14"/><path d="M11.800 9.300C11.500 11.500 8.800 11.900 7.200 11.200" fill="none" stroke="#4e9a14" stroke-width="1.700"/><path d="M8 13.300L4.800 10.800L8.200 8.900Z" fill="#4e9a14"/></svg>

<svg style="left:-9px;top:1014px" width="14" height="13" viewBox="0 0 14 13"><rect x="0.500" y="0.500" width="13" height="12" fill="#fff" stroke="#7a8496"/><path d="M1 2.500h12M1 4.500h12M1 6.500h12M1 8.500h12M1 10.500h12" stroke="#a8b8d4"/></svg>
<div class="t" style="left:10.3px;top:1016px;font-size:12.3px;letter-spacing:-0.523px;color:#000;">graph1 Series Groups</div>
<svg style="left:672px;top:1014px" width="16" height="13" viewBox="0 0 16 13"><rect x="0.500" y="0.500" width="15" height="12" fill="#fff" stroke="#7a8496"/><rect x="1" y="1" width="14" height="2" fill="#e8c86a"/><path d="M3.500 1v11M6.500 1v11M9.500 1v11M12.500 1v11" stroke="#7a8496"/></svg>
<div class="t" style="left:693.3px;top:1016px;font-size:12.3px;letter-spacing:-0.423px;color:#000;">graph1 Category Groups</div>

<!-- left table -->
<div class="a" style="left:-1px;top:1031px;width:667px;height:90px;background:#fff;border:1px solid #828790"></div>
<div class="a" style="left:0;top:1075px;width:665px;height:1px;background:#e9e9e9"></div>
<div class="a" style="left:0;top:1094px;width:665px;height:1px;background:#e9e9e9"></div>
<div class="a" style="left:0;top:1113px;width:665px;height:1px;background:#e9e9e9"></div>
<div class="a" style="left:149px;top:1033px;width:1px;height:82px;background:#ececec"></div><div class="a" style="left:148px;top:1033px;width:1px;height:23px;background:#dcdcdc"></div>
<div class="a" style="left:309px;top:1033px;width:1px;height:82px;background:#ececec"></div><div class="a" style="left:308px;top:1033px;width:1px;height:23px;background:#dcdcdc"></div>
<div class="a" style="left:389px;top:1033px;width:1px;height:82px;background:#ececec"></div><div class="a" style="left:388px;top:1033px;width:1px;height:23px;background:#dcdcdc"></div>
<div class="a" style="left:469px;top:1033px;width:1px;height:82px;background:#ececec"></div><div class="a" style="left:468px;top:1033px;width:1px;height:23px;background:#dcdcdc"></div>
<div class="a" style="left:629px;top:1033px;width:1px;height:82px;background:#ececec"></div><div class="a" style="left:628px;top:1033px;width:1px;height:23px;background:#dcdcdc"></div>
<div class="t" style="left:-4.5px;top:1039px;font-size:12.3px;letter-spacing:-0.370px;">Name</div><div class="t" style="left:154.8px;top:1039px;font-size:12.3px;letter-spacing:-0.973px;">Series</div><div class="t" style="left:314.5px;top:1039px;font-size:12.3px;letter-spacing:-0.043px;">Grouping</div><div class="t" style="left:394.5px;top:1039px;font-size:12.3px;letter-spacing:-0.107px;">Filter</div><div class="t" style="left:474.5px;top:1039px;font-size:12.3px;letter-spacing:-0.095px;">Sorting</div>
<svg style="left:0;top:1062px" width="7" height="8"><path d="M0 0.500h6M0 2.500h6M0 4.500h6M0 6.500h6" stroke="#56748a"/></svg>
<div class="t" style="left:11.0px;top:1061px;font-size:12px;letter-spacing:-0.386px;">seriesGroup</div><div class="t" style="left:154.8px;top:1061px;font-size:12px;letter-spacing:-0.602px;">barSeries1 (BarSeries)</div>

<!-- right table -->
<div class="a" style="left:670px;top:1031px;width:680px;height:90px;background:#fff;border:1px solid #828790"></div>
<div class="a" style="left:672px;top:1075px;width:677px;height:1px;background:#e9e9e9"></div>
<div class="a" style="left:672px;top:1094px;width:677px;height:1px;background:#e9e9e9"></div>
<div class="a" style="left:672px;top:1113px;width:677px;height:1px;background:#e9e9e9"></div>
<div class="a" style="left:832px;top:1033px;width:1px;height:82px;background:#ececec"></div><div class="a" style="left:831px;top:1033px;width:1px;height:23px;background:#dcdcdc"></div>
<div class="a" style="left:992px;top:1033px;width:1px;height:82px;background:#ececec"></div><div class="a" style="left:991px;top:1033px;width:1px;height:23px;background:#dcdcdc"></div>
<div class="a" style="left:1152px;top:1033px;width:1px;height:82px;background:#ececec"></div><div class="a" style="left:1151px;top:1033px;width:1px;height:23px;background:#dcdcdc"></div>
<div class="a" style="left:1232px;top:1033px;width:1px;height:82px;background:#ececec"></div><div class="a" style="left:1231px;top:1033px;width:1px;height:23px;background:#dcdcdc"></div>
<div class="a" style="left:1312px;top:1033px;width:1px;height:82px;background:#ececec"></div><div class="a" style="left:1311px;top:1033px;width:1px;height:23px;background:#dcdcdc"></div>
<div class="t" style="left:677.8px;top:1039px;font-size:12.3px;letter-spacing:-0.203px;">Name</div><div class="t" style="left:837.5px;top:1039px;font-size:12.3px;letter-spacing:-0.399px;">Label</div><div class="t" style="left:997.8px;top:1039px;font-size:12.3px;letter-spacing:-0.933px;">Series</div><div class="t" style="left:1157.5px;top:1039px;font-size:12.3px;letter-spacing:-0.043px;">Grouping</div><div class="t" style="left:1237.5px;top:1039px;font-size:12.3px;letter-spacing:-0.067px;">Filter</div>
<div class="a" style="left:1312px;top:1033px;width:37px;height:24px;overflow:hidden"><div class="a" style="left:-1312px;top:-1033px"><div class="t" style="left:1317.5px;top:1039px;font-size:12.3px;letter-spacing:-0.095px;">Sorting</div></div></div>
<svg style="left:677px;top:1058px" width="14" height="15" viewBox="677 1058 14 15"><path d="M681.200 1059.800H679V1071.200H681.200" fill="none" stroke="#f25a00" stroke-width="1.900"/><path d="M682.500 1062.500h6.500M682.500 1064.500h6.500M682.500 1066.500h6.500M682.500 1068.500h6.500" stroke="#56748a"/></svg>
<div class="t" style="left:694.0px;top:1061px;font-size:12px;letter-spacing:-0.151px;">dateGroup</div><div class="t" style="left:997.8px;top:1061px;font-size:12px;letter-spacing:-0.612px;">barSeries1 (BarSeries)</div><div class="t" style="left:1158.3px;top:1061px;font-size:12px;letter-spacing:-0.286px;">= Fields.Date</div>
<div class="a" style="left:1312px;top:1057px;width:36px;height:18px;overflow:hidden"><div class="a" style="left:-1312px;top:-1057px"><div class="t" style="left:1318.6px;top:1061px;font-size:12px;letter-spacing:-0.011px;">= Fields.Date</div></div></div>
<!-- ===== Right dock: Data Explorer ===== -->
<div class="a" style="left:1350px;top:121px;width:4px;height:994px;background:#fff"></div>
<div class="hdr" style="left:1354px;top:123px;width:542px;height:26px"></div>
<div class="t" style="left:1359.0px;top:130px;font-size:13.3px;letter-spacing:0.099px;color:#fff;">Data Explorer</div>
<svg style="left:1887px;top:133px" width="7" height="7" viewBox="0 0 7 7"><path d="M1 1L6 6M6 1L1 6" stroke="#fff" stroke-width="2" stroke-linecap="square"/></svg>
<div class="a" style="left:1354px;top:149px;width:542px;height:25px;background:linear-gradient(#fcfcfc,#efefef);border-bottom-left-radius:3px"></div>
<svg style="left:1356px;top:152px" width="18" height="18" viewBox="1356 152 18 18"><defs><linearGradient id="pg1" x1="0" y1="0" x2="1" y2="1"><stop offset="0" stop-color="#e6f1fd"/><stop offset="1" stop-color="#b4d2f6"/></linearGradient><linearGradient id="pen" x1="0" y1="0" x2="1" y2="1"><stop offset="0" stop-color="#ff9a8a"/><stop offset="1" stop-color="#e8200a"/></linearGradient></defs><rect x="1357.600" y="154.700" width="13" height="13.800" fill="url(#pg1)" stroke="#6f8fcc" stroke-width="1"/><path d="M1359 168.500H1370.600V155" fill="none" stroke="#5a66a4" stroke-width="1.100"/><rect x="1360.500" y="158.500" width="7" height="5" fill="#fff" stroke="#6a90d4"/><path d="M1360 156.500h6M1360 165.500h8" stroke="#7fa4dc"/><path d="M1361.300 159.800h1.800" stroke="#2030f0" stroke-width="1.200"/><path d="M1371 153.300L1364.300 160.800" stroke="url(#pen)" stroke-width="3"/><path d="M1364.600 160.400L1362.600 162" stroke="#fbe0c0" stroke-width="1.800"/><path d="M1363.800 161.700h-1.800" stroke="#d83a1a" stroke-width="1"/></svg>
<svg style="left:1380px;top:153px" width="17" height="16" viewBox="0 0 17 16"><defs><linearGradient id="rf1" x1="0" y1="0" x2="1" y2="1"><stop offset="0.3" stop-color="#fff"/><stop offset="1" stop-color="#c8d6f4"/></linearGradient><linearGradient id="rt1" x1="0" y1="0" x2="0" y2="1"><stop offset="0" stop-color="#3f72dc"/><stop offset="1" stop-color="#9dbcf6"/></linearGradient></defs><rect x="1" y="0.800" width="14.800" height="14" fill="url(#rf1)"/><rect x="1" y="0.500" width="14.800" height="2.600" fill="url(#rt1)"/><path d="M1 1V14.800" stroke="#7f9acc" stroke-width="1"/><path d="M0.800 14.700H15.800V2" fill="none" stroke="#2c3c5c" stroke-width="1.100"/><path d="M5 8.200C5.300 6 8 5.600 9.600 6.300" fill="none" stroke="#4e9a14" stroke-width="1.700"/><path d="M8.800 4.200L12 6.700L8.600 8.600Z" fill="#4e9a14"/><path d="M11.800 9.300C11.500 11.500 8.800 11.900 7.200 11.200" fill="none" stroke="#4e9a14" stroke-width="1.700"/><path d="M8 13.300L4.800 10.800L8.200 8.900Z" fill="#4e9a14"/></svg>
<svg style="left:1361px;top:174px" width="60" height="48" viewBox="1361 174 60 48"><path d="M1371 182.500h6M1384.500 191v19M1389 198.500h6M1384.500 214.500h10" stroke="#9a9a9a" stroke-dasharray="1 1"/><rect x="1361.500" y="178.500" width="8" height="8" fill="#fff" stroke="#9a9a9a"/><path d="M1363.500 182.500h4" stroke="#34508c"/><rect x="1380.500" y="194.500" width="8" height="8" fill="#fff" stroke="#9a9a9a"/><path d="M1382.500 198.500h4M1384.500 196.500v4" stroke="#34508c"/><defs><linearGradient id="cy" x1="0" x2="1"><stop offset="0" stop-color="#f9d978"/><stop offset=".4" stop-color="#fdf0b8"/><stop offset="1" stop-color="#d89a10"/></linearGradient></defs><path d="M1379.200 176.500v11.500c0 2.500 11.600 2.500 11.600 0v-11.500z" fill="url(#cy)" stroke="#c8921a" stroke-width=".8"/><ellipse cx="1385" cy="176.500" rx="5.800" ry="2.100" fill="#fdeeb0" stroke="#c8921a" stroke-width=".8"/><rect x="1395.500" y="192.500" width="14" height="10" fill="#fdf6e0" stroke="#8a6a3a"/><circle cx="1402.500" cy="197.500" r="3.800" fill="#fff" stroke="#2030a0" stroke-width="1.300"/><path d="M1402.500 195v2.800h2" stroke="#2030a0" fill="none"/><rect x="1395.500" y="208.500" width="14" height="10" fill="#fdf6e0" stroke="#8a6a3a"/><text x="1402.500" y="216.800" font-family="Liberation Sans, sans-serif" font-size="8.500px" font-weight="bold" fill="#101078" text-anchor="middle" textLength="12" lengthAdjust="spacingAndGlyphs">abc</text></svg>
<div class="t" style="left:1397.5px;top:176px;font-size:12px;letter-spacing:-0.734px;color:#000;">csvDataSource1</div>
<div class="t" style="left:1416.0px;top:192px;font-size:12px;letter-spacing:-0.449px;color:#000;">Date</div>
<div class="t" style="left:1416.0px;top:208px;font-size:12px;letter-spacing:-0.200px;color:#000;">Value</div>
<div class="a" style="left:1354px;top:383px;width:93px;height:25px;border-left:1px solid #ababab;border-bottom:1px solid #ababab;background:#fff"></div>
<div class="t" style="left:1360.3px;top:388px;font-size:12px;letter-spacing:-0.181px;color:#1e1e1e;">Report Explorer</div>
<div class="a" style="left:1447px;top:383px;width:83px;height:25px;background:#3359a5"></div>
<div class="t" style="left:1453.4px;top:388px;font-size:12px;letter-spacing:-0.230px;color:#fff;">Data Explorer</div>
<div class="hdr" style="left:1354px;top:412px;width:542px;height:26px"></div>
<div class="t" style="left:1359.2px;top:419px;font-size:13.3px;letter-spacing:0.209px;color:#fff;">Properties</div>
<svg style="left:1887px;top:422px" width="7" height="7" viewBox="0 0 7 7"><path d="M1 1L6 6M6 1L1 6" stroke="#fff" stroke-width="2" stroke-linecap="square"/></svg>
<div class="t" style="left:1358.4px;top:450px;font-size:15px;letter-spacing:0.367px;color:#000;font-weight:bold;">graphAxis2</div>
<div class="a" style="left:1354px;top:474px;width:542px;height:25px;background:#f0f0f0"></div>
<div class="a" style="left:1356px;top:476px;width:23px;height:21px;background:#c7e0f6;border:1px solid #92c7f4"></div>
<svg style="left:1358px;top:478px" width="20" height="19" viewBox="1358 478 20 19"><rect x="1359.500" y="479.500" width="6" height="6" rx="1.200" fill="#fff" stroke="#5a92d4"/><rect x="1359.500" y="488.500" width="6" height="6" rx="1.200" fill="#fff" stroke="#5a92d4"/><path d="M1360.800 482.500h3.400M1362.500 480.800v3.400M1360.800 491.500h3.400M1362.500 489.800v3.400" stroke="#000" stroke-width="1.300"/><path d="M1367 481.500h4M1367 492.500h4" stroke="#3a3a3a" stroke-width="1.200"/><path d="M1367 483.500h4M1367 485.500h4M1367 487.500h4M1367 489.500h4M1367 494.500h4" stroke="#8aa08c" stroke-width="0.900"/><path d="M1372 483.500h3M1372 485.500h3M1372 487.500h3M1372 489.500h3M1372 494.500h3" stroke="#9c8cb4" stroke-width="0.900"/></svg>
<svg style="left:1381px;top:477px" width="18" height="19" viewBox="1381 477 18 19"><text x="1382" y="486" font-family="Liberation Serif, serif" font-size="10.500px" font-weight="bold" fill="#2a48c0">A</text><text x="1382.500" y="494.200" font-family="Liberation Serif, serif" font-size="10px" font-weight="bold" fill="#a82424">Z</text><path d="M1394.500 479v14" stroke="#000" stroke-width="1.300"/><path d="M1392 489.500L1394.500 494L1397 489.500L1394.500 491Z" fill="#000"/></svg>
<div class="a" style="left:1404px;top:477px;width:1px;height:21px;background:#7e7e7e"></div>
<svg style="left:1411px;top:479px" width="16" height="15" viewBox="0 0 16 15"><rect x="0.500" y="0.500" width="15" height="14" fill="#e6e6e6" stroke="#b4b4b4"/><rect x="1" y="1" width="14" height="1.800" fill="#cfcfcf"/><path d="M2.500 5.500h5l1 1.500h5v5.500h-11z" fill="#ececec" stroke="#bcbcbc"/><path d="M4 8.500h1M4 10.500h1M6 10.500h4" stroke="#b0b0b0"/></svg>
<div class="a" style="left:1354px;top:500px;width:542px;height:574px;background:#fff;border-left:1px solid #a0a0a0;border-top:1px solid #a0a0a0;border-bottom:1px solid #a0a0a0"></div>
<div class="a" style="left:1355px;top:501px;width:21px;height:561px;background:#f3f6fb"></div>
<div class="a" style="left:1604px;top:501px;width:1px;height:561px;background:#eceef6"></div>
<div class="a" style="left:1355px;top:501px;width:541px;height:17px;background:#f3f6fb"></div>
<svg style="left:1360px;top:507px" width="9" height="6" viewBox="0 0 9 6"><path d="M0.600 0.600L4.500 4.700L8.400 0.600" fill="none" stroke="#2e2e2e" stroke-width="1.600"/></svg>
<div class="t" style="left:1379.7px;top:505px;font-size:11px;color:#000;font-weight:bold;letter-spacing:0.34px;">Appearance</div>
<div class="a" style="left:1376px;top:533px;width:520px;height:1px;background:#f3f6fb"></div>
<svg style="left:1362px;top:522px" width="6" height="10" viewBox="0 0 6 10"><path d="M0.700 0.700L4.800 5L0.700 9.300" fill="none" stroke="#8a8a8a" stroke-width="1.500"/></svg>
<div class="t" style="left:1379.7px;top:521px;font-size:11px;color:#000;letter-spacing:-0.17px;">MajorGridLineStyle</div>
<div class="a" style="left:1376px;top:549px;width:520px;height:1px;background:#f3f6fb"></div>
<svg style="left:1362px;top:538px" width="6" height="10" viewBox="0 0 6 10"><path d="M0.700 0.700L4.800 5L0.700 9.300" fill="none" stroke="#8a8a8a" stroke-width="1.500"/></svg>
<div class="t" style="left:1379.7px;top:537px;font-size:11px;color:#000;letter-spacing:-0.17px;">MinorGridLineStyle</div>
<div class="a" style="left:1376px;top:565px;width:520px;height:1px;background:#f3f6fb"></div>
<svg style="left:1362px;top:554px" width="6" height="10" viewBox="0 0 6 10"><path d="M0.700 0.700L4.800 5L0.700 9.300" fill="none" stroke="#8a8a8a" stroke-width="1.500"/></svg>
<div class="t" style="left:1379.7px;top:553px;font-size:11px;color:#000;letter-spacing:-0.17px;">Style</div>
<div class="a" style="left:1376px;top:581px;width:520px;height:1px;background:#f3f6fb"></div>
<svg style="left:1362px;top:570px" width="6" height="10" viewBox="0 0 6 10"><path d="M0.700 0.700L4.800 5L0.700 9.300" fill="none" stroke="#8a8a8a" stroke-width="1.500"/></svg>
<div class="t" style="left:1379.7px;top:569px;font-size:11px;color:#000;letter-spacing:-0.17px;">TitleStyle</div>
<div class="a" style="left:1355px;top:582px;width:541px;height:16px;background:#f3f6fb"></div>
<svg style="left:1360px;top:587px" width="9" height="6" viewBox="0 0 9 6"><path d="M0.600 0.600L4.500 4.700L8.400 0.600" fill="none" stroke="#2e2e2e" stroke-width="1.600"/></svg>
<div class="t" style="left:1379.7px;top:585px;font-size:11px;color:#000;font-weight:bold;letter-spacing:0.34px;">Design</div>
<div class="a" style="left:1376px;top:613px;width:520px;height:1px;background:#f3f6fb"></div>
<div class="t" style="left:1379.7px;top:601px;font-size:11px;color:#000;letter-spacing:-0.17px;">(Name)</div>
<div class="t" style="left:1607.7px;top:601px;font-size:11px;color:#000;font-weight:bold;letter-spacing:0.25px;">graphAxis2</div>
<div class="a" style="left:1355px;top:614px;width:541px;height:16px;background:#f3f6fb"></div>
<svg style="left:1360px;top:619px" width="9" height="6" viewBox="0 0 9 6"><path d="M0.600 0.600L4.500 4.700L8.400 0.600" fill="none" stroke="#2e2e2e" stroke-width="1.600"/></svg>
<div class="t" style="left:1379.7px;top:617px;font-size:11px;color:#000;font-weight:bold;letter-spacing:0.34px;">Layout</div>
<div class="a" style="left:1376px;top:645px;width:520px;height:1px;background:#f3f6fb"></div>
<div class="t" style="left:1379.7px;top:633px;font-size:11px;color:#000;letter-spacing:-0.17px;">LabelPlacement</div>
<div class="t" style="left:1607.7px;top:633px;font-size:11px;color:#000;letter-spacing:-0.17px;">NextToAxis</div>
<div class="a" style="left:1376px;top:661px;width:520px;height:1px;background:#f3f6fb"></div>
<div class="t" style="left:1379.7px;top:649px;font-size:11px;color:#000;letter-spacing:-0.17px;">MaxSize</div>
<div class="a" style="left:1376px;top:677px;width:520px;height:1px;background:#f3f6fb"></div>
<div class="t" style="left:1379.7px;top:665px;font-size:11px;color:#000;letter-spacing:-0.17px;">MinSize</div>
<div class="a" style="left:1376px;top:693px;width:520px;height:1px;background:#f3f6fb"></div>
<div class="t" style="left:1379.7px;top:681px;font-size:11px;color:#000;letter-spacing:-0.17px;">Size</div>
<div class="a" style="left:1376px;top:709px;width:520px;height:1px;background:#f3f6fb"></div>
<div class="t" style="left:1379.7px;top:697px;font-size:11px;color:#000;letter-spacing:-0.17px;">TitlePlacement</div>
<div class="t" style="left:1607.7px;top:697px;font-size:11px;color:#000;letter-spacing:-0.17px;">Centered</div>
<div class="a" style="left:1355px;top:710px;width:541px;height:16px;background:#f3f6fb"></div>
<svg style="left:1360px;top:715px" width="9" height="6" viewBox="0 0 9 6"><path d="M0.600 0.600L4.500 4.700L8.400 0.600" fill="none" stroke="#2e2e2e" stroke-width="1.600"/></svg>
<div class="t" style="left:1379.7px;top:713px;font-size:11px;color:#000;font-weight:bold;letter-spacing:0.34px;">Misc</div>
<div class="a" style="left:1376px;top:741px;width:520px;height:1px;background:#f3f6fb"></div>
<div class="t" style="left:1379.7px;top:729px;font-size:11px;color:#000;letter-spacing:-0.17px;">Format</div>
<div class="t" style="left:1607.7px;top:729px;font-size:11px;color:#000;font-weight:bold;letter-spacing:0.25px;">{0:Y}</div>
<div class="a" style="left:1376px;top:757px;width:520px;height:1px;background:#f3f6fb"></div>
<div class="t" style="left:1379.7px;top:745px;font-size:11px;color:#000;letter-spacing:-0.17px;">LabelAngle</div>
<div class="t" style="left:1607.7px;top:745px;font-size:11px;color:#000;letter-spacing:-0.17px;">0</div>
<div class="a" style="left:1376px;top:773px;width:520px;height:1px;background:#f3f6fb"></div>
<div class="t" style="left:1379.7px;top:761px;font-size:11px;color:#000;letter-spacing:-0.17px;">MajorTickMarkDisplayType</div>
<div class="t" style="left:1607.7px;top:761px;font-size:11px;color:#000;letter-spacing:-0.17px;">Cross</div>
<div class="a" style="left:1376px;top:789px;width:520px;height:1px;background:#f3f6fb"></div>
<div class="t" style="left:1379.7px;top:777px;font-size:11px;color:#000;letter-spacing:-0.17px;">MinorTickMarkDisplayType</div>
<div class="t" style="left:1607.7px;top:777px;font-size:11px;color:#000;letter-spacing:-0.17px;">None</div>
<div class="a" style="left:1376px;top:805px;width:520px;height:1px;background:#f3f6fb"></div>
<div class="t" style="left:1379.7px;top:793px;font-size:11px;color:#000;letter-spacing:-0.17px;">MultiLevelCategoryLabels</div>
<div class="t" style="left:1607.7px;top:793px;font-size:11px;color:#000;letter-spacing:-0.17px;">True</div>
<div class="a" style="left:1376px;top:821px;width:520px;height:1px;background:#f3f6fb"></div>
<svg style="left:1360px;top:811px" width="9" height="6" viewBox="0 0 9 6"><path d="M0.600 0.600L4.500 4.700L8.400 0.600" fill="none" stroke="#2e2e2e" stroke-width="1.600"/></svg>
<div class="t" style="left:1379.7px;top:809px;font-size:11px;color:#000;letter-spacing:-0.17px;">Scale</div>
<div class="t" style="left:1607.7px;top:809px;font-size:11px;color:#000;font-weight:bold;letter-spacing:0.25px;">DateTime Scale</div>
<div class="a" style="left:1376px;top:837px;width:520px;height:1px;background:#f3f6fb"></div>
<div class="a" style="left:1391px;top:823px;width:267px;height:14px;background:#7dbb7b"></div>
<div class="t" style="left:1400.7px;top:825px;font-size:11px;color:#000;letter-spacing:-0.17px;">BaseUnit</div>
<div class="t" style="left:1607.7px;top:825px;font-size:11px;color:#0a4a0a;font-weight:bold;letter-spacing:0.25px;">Months</div>
<div class="a" style="left:1376px;top:853px;width:520px;height:1px;background:#f3f6fb"></div>
<div class="t" style="left:1400.7px;top:841px;font-size:11px;color:#000;letter-spacing:-0.17px;">CrossAxisPositions</div>
<div class="t" style="left:1607.7px;top:841px;font-size:11px;color:#000;font-weight:bold;letter-spacing:0.25px;">(Collection)</div>
<div class="a" style="left:1376px;top:869px;width:520px;height:1px;background:#f3f6fb"></div>
<div class="t" style="left:1400.7px;top:857px;font-size:11px;color:#000;letter-spacing:-0.17px;">DataPointTicks</div>
<div class="t" style="left:1607.7px;top:857px;font-size:11px;color:#000;letter-spacing:-0.17px;">False</div>
<div class="a" style="left:1376px;top:885px;width:520px;height:1px;background:#f3f6fb"></div>
<div class="t" style="left:1400.7px;top:873px;font-size:11px;color:#000;letter-spacing:-0.17px;">LabelStep</div>
<div class="t" style="left:1607.7px;top:873px;font-size:11px;color:#000;letter-spacing:-0.17px;">1</div>
<div class="a" style="left:1376px;top:901px;width:520px;height:1px;background:#f3f6fb"></div>
<div class="t" style="left:1400.7px;top:889px;font-size:11px;color:#000;letter-spacing:-0.17px;">LabelUnit</div>
<div class="t" style="left:1607.7px;top:889px;font-size:11px;color:#000;letter-spacing:-0.17px;">Auto</div>
<div class="a" style="left:1376px;top:917px;width:520px;height:1px;background:#f3f6fb"></div>
<div class="t" style="left:1400.7px;top:905px;font-size:11px;color:#000;letter-spacing:-0.17px;">MajorStep</div>
<div class="t" style="left:1607.7px;top:905px;font-size:11px;color:#000;letter-spacing:-0.17px;">1</div>
<div class="a" style="left:1376px;top:933px;width:520px;height:1px;background:#f3f6fb"></div>
<div class="t" style="left:1400.7px;top:921px;font-size:11px;color:#000;letter-spacing:-0.17px;">MajorUnit</div>
<div class="t" style="left:1607.7px;top:921px;font-size:11px;color:#000;letter-spacing:-0.17px;">Auto</div>
<div class="a" style="left:1376px;top:949px;width:520px;height:1px;background:#f3f6fb"></div>
<div class="t" style="left:1400.7px;top:937px;font-size:11px;color:#000;letter-spacing:-0.17px;">Maximum</div>
<div class="a" style="left:1376px;top:965px;width:520px;height:1px;background:#f3f6fb"></div>
<div class="t" style="left:1400.7px;top:953px;font-size:11px;color:#000;letter-spacing:-0.17px;">Minimum</div>
<div class="a" style="left:1376px;top:981px;width:520px;height:1px;background:#f3f6fb"></div>
<div class="t" style="left:1400.7px;top:969px;font-size:11px;color:#000;letter-spacing:-0.17px;">MinorStep</div>
<div class="t" style="left:1607.7px;top:969px;font-size:11px;color:#000;letter-spacing:-0.17px;">1</div>
<div class="a" style="left:1376px;top:997px;width:520px;height:1px;background:#f3f6fb"></div>
<div class="t" style="left:1400.7px;top:985px;font-size:11px;color:#000;letter-spacing:-0.17px;">MinorUnit</div>
<div class="t" style="left:1607.7px;top:985px;font-size:11px;color:#000;letter-spacing:-0.17px;">Auto</div>
<div class="a" style="left:1376px;top:1013px;width:520px;height:1px;background:#f3f6fb"></div>
<div class="t" style="left:1400.7px;top:1001px;font-size:11px;color:#000;letter-spacing:-0.17px;">PositionMode</div>
<div class="t" style="left:1607.7px;top:1001px;font-size:11px;color:#000;font-weight:bold;letter-spacing:0.25px;">OnTicks</div>
<div class="a" style="left:1376px;top:1029px;width:520px;height:1px;background:#f3f6fb"></div>
<div class="t" style="left:1400.7px;top:1017px;font-size:11px;color:#000;letter-spacing:-0.17px;">Reversed</div>
<div class="t" style="left:1607.7px;top:1017px;font-size:11px;color:#000;letter-spacing:-0.17px;">False</div>
<div class="a" style="left:1376px;top:1045px;width:520px;height:1px;background:#f3f6fb"></div>
<div class="t" style="left:1400.7px;top:1033px;font-size:11px;color:#000;letter-spacing:-0.17px;">SpacingSlotCount</div>
<div class="t" style="left:1607.7px;top:1033px;font-size:11px;color:#000;letter-spacing:-0.17px;">1</div>
<div class="a" style="left:1376px;top:1061px;width:520px;height:1px;background:#f3f6fb"></div>
<div class="t" style="left:1379.7px;top:1049px;font-size:11px;color:#000;letter-spacing:-0.17px;">Title</div>
<div class="a" style="left:1354px;top:1077px;width:542px;height:38px;background:#f0f0f0;border-left:1px solid #a0a0a0;border-top:1px solid #a0a0a0"></div>
<div class="t" style="left:1360.0px;top:1082px;font-size:11px;color:#000;font-weight:bold;letter-spacing:0.1px;">BaseUnit</div>
<div class="t" style="left:1360.0px;top:1097px;font-size:11px;letter-spacing:-0.021px;color:#000;">Specifies the base unit for the scale. The base unit defines the interval between the points on the axis. By</div>
<div class="t" style="left:1360.0px;top:1111px;font-size:11px;letter-spacing:-0.036px;color:#000;">default the base units are according to the smallest difference between any two dates in the data.</div>
</body></html>
